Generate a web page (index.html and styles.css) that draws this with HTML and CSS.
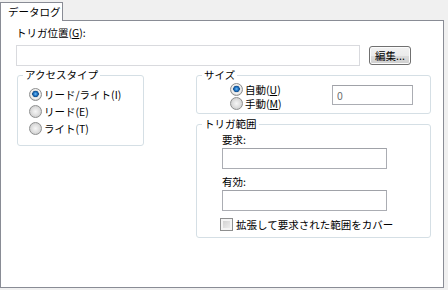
FILE: index.html
```html
<!DOCTYPE html>
<html lang="ja">
<head>
    <meta charset="UTF-8">
    <title>データログ</title>
    <link rel="stylesheet" href="styles.css">
</head>
<body>
    <!-- Tab strip -->
    <div class="tabs">
        <div class="tab">データログ</div>
    </div>

    <div class="panel">
        <div class="field-label">トリガ位置(<u>G</u>):</div>
        <div class="path-row">
            <input type="text" class="path-input">
            <button class="edit-btn">編集...</button>
        </div>

        <div class="columns">
            <fieldset class="group access-group">
                <legend>アクセスタイプ</legend>
                <div class="access-body">
                    <label class="opt"><input type="radio" name="access" checked>リード/ライト(I)</label>
                    <label class="opt"><input type="radio" name="access">リード(E)</label>
                    <label class="opt"><input type="radio" name="access">ライト(T)</label>
                </div>
            </fieldset>

            <div class="right-col">
                <fieldset class="group size-group">
                    <legend>サイズ</legend>
                    <div class="size-body">
                        <div class="size-opts">
                            <label class="opt small"><input type="radio" name="size" checked>自動(<u>U</u>)</label>
                            <label class="opt small"><input type="radio" name="size">手動(<u>M</u>)</label>
                        </div>
                        <input type="text" class="size-input" value="0">
                    </div>
                </fieldset>

                <fieldset class="group range-group">
                    <legend>トリガ範囲</legend>
                    <div class="range-body">
                        <div class="sub-label">要求:</div>
                        <input type="text" class="range-input">
                        <div class="sub-label second">有効:</div>
                        <input type="text" class="range-input">
                        <label class="check"><input type="checkbox">拡張して要求された範囲をカバー</label>
                    </div>
                </fieldset>
            </div>
        </div>
    </div>
</body>
</html>
```

FILE: styles.css
```css
* {
    box-sizing: border-box;
}
body {
    margin: 0;
    padding-top: 2px;
    background: #f0f0f0;
    font-family: "Noto Sans CJK JP", "Liberation Sans", sans-serif;
    font-size: 10.5px;
    color: #000;
    width: 448px;
    height: 290px;
    overflow: hidden;
}
.tabs {
    display: flex;
}
.tab {
    position: relative;
    z-index: 1;
    width: 63px;
    height: 19px;
    margin-bottom: -1px;
    padding: 2px 0 0 7px;
    line-height: 14px;
    background: #fff;
    border: 1px solid #898c95;
    border-bottom: none;
}
.panel {
    width: 444px;
    height: 268px;
    background: #fff;
    border: 1px solid #898c95;
    padding: 5px 0 0 15px;
}
.field-label {
    line-height: 14px;
}
.path-row {
    display: flex;
    align-items: center;
    margin-top: 5px;
}
input[type="text"] {
    margin: 0;
    padding: 0 4px;
    font: inherit;
    border: 1px solid #abadb3;
    border-top-color: #a0a2a8;
    background: #fff;
    outline: none;
}
.path-input {
    width: 344px;
    height: 21px;
    border-color: #d9dade !important;
}
.edit-btn {
    width: 42px;
    height: 19px;
    margin-left: 9px;
    padding: 0;
    font: inherit;
    line-height: 15px;
    border: 1px solid #707070;
    border-radius: 3px;
    background: linear-gradient(#f2f2f2 0%, #ebebeb 50%, #dddddd 51%, #cfcfcf 100%);
    box-shadow: inset 0 0 0 1px #fcfcfc;
}
.columns {
    display: flex;
    margin-top: 2px;
}
.group {
    margin: 0;
    padding: 0;
    border: 1px solid #d5dfe5;
    border-radius: 3px;
    min-width: 0;
}
.group legend {
    margin-left: 5px;
    padding: 0 2px;
    line-height: 14px;
}
.access-group {
    width: 127px;
    margin-left: 1px;
    align-self: flex-start;
}
.access-body {
    padding: 4px 0 8px 11px;
}
.opt {
    display: flex;
    align-items: center;
    height: 17px;
}
.opt.small {
    height: 14px;
}
.right-col {
    display: flex;
    flex-direction: column;
    width: 235px;
    margin-left: 52px;
}
.size-body {
    display: flex;
    align-items: flex-start;
    padding: 0 17px 3px 33px;
}
.size-input {
    width: 81px;
    height: 20px;
    margin: 3px 0 0 auto !important;
    color: #6d6d6d;
}
.range-group {
    margin-top: 3px;
}
.range-body {
    padding: 2px 0 6px 25px;
}
.sub-label {
    line-height: 14px;
}
.sub-label.second {
    margin-top: 6px;
}
.range-input {
    display: block;
    width: 165px;
    height: 21px;
    margin-top: 1px !important;
}
.check {
    display: flex;
    align-items: center;
    height: 14px;
    margin: 6px 0 0 -2px;
}

/* radio buttons and checkbox drawn by hand */
input[type="radio"] {
    appearance: none;
    width: 13px;
    height: 13px;
    margin: 0 2px 0 0;
    border: 1px solid #8e8f8f;
    border-radius: 50%;
    background: radial-gradient(circle at 50% 50%, #f6f6f6 0, #e4e4e4 3px, #cfcfcf 6px);
    flex: none;
}
input[type="radio"]:checked {
    background: radial-gradient(circle at 50% 45%, #74c2f7 0, #2a7fd0 1.5px, #0c4c8c 3px, #dcdcdc 3.5px, #f4f4f4 4.5px, #cfcfcf 6px);
}
input[type="checkbox"] {
    appearance: none;
    width: 13px;
    height: 13px;
    margin: 0 3px 0 0;
    border: 1px solid #8e8f8f;
    background: linear-gradient(135deg, #cbcbcb, #f4f4f4);
    box-shadow: inset 0 0 0 2px #f4f4f4;
    flex: none;
}
```
